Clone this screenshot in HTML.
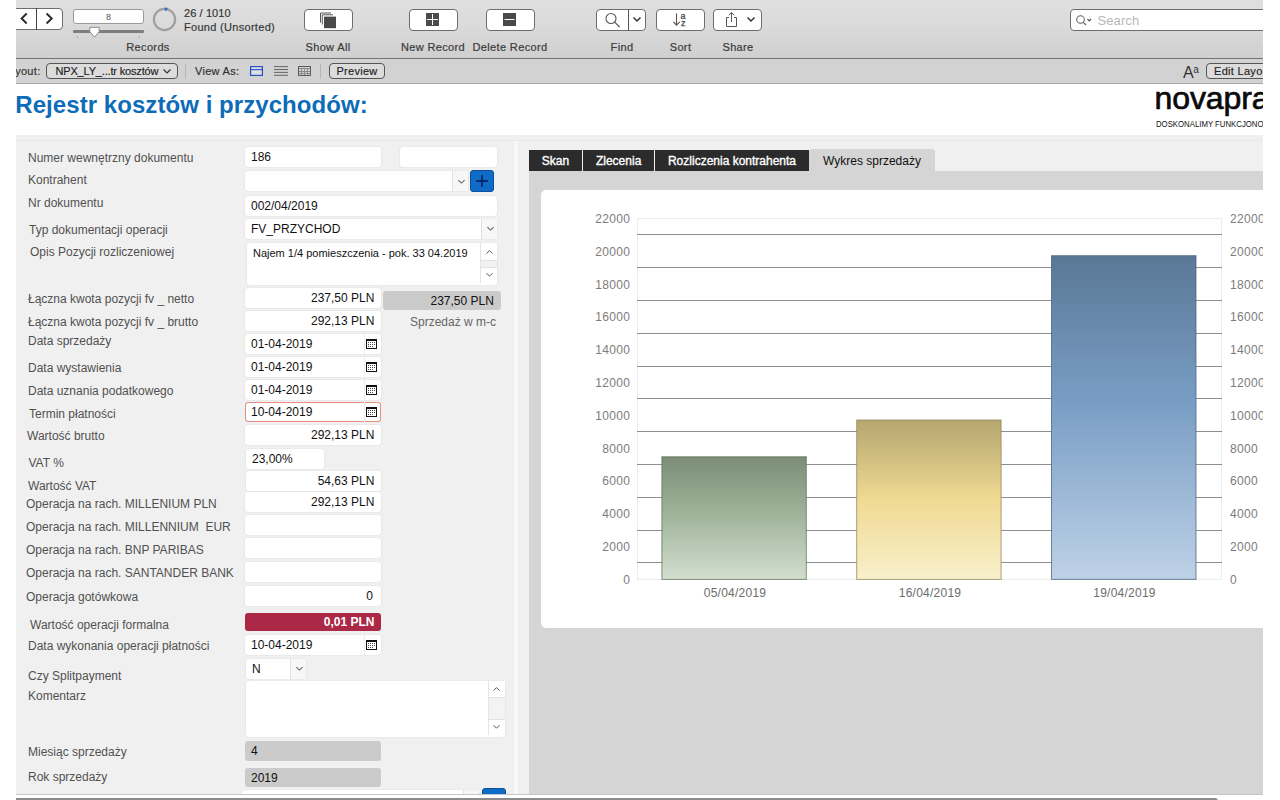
<!DOCTYPE html>
<html lang="pl">
<head>
<meta charset="utf-8">
<title>Rejestr kosztów i przychodów</title>
<style>
*{box-sizing:border-box;margin:0;padding:0}
html,body{width:1280px;height:800px;overflow:hidden;background:#fff}
body{font-family:"Liberation Sans",sans-serif;font-size:12px;color:#000;position:relative}
#app{position:absolute;left:0;top:0;width:1280px;height:800px;overflow:hidden;background:#fff}
.mask{position:absolute;top:0;height:800px;background:#fff;z-index:50}
.abs{position:absolute}
/* toolbar */
#tb{position:absolute;left:0;top:0;width:1280px;height:58px;background:linear-gradient(#dfdfdf,#dadada 45%,#cfcfcf)}
#tbline{position:absolute;left:0;top:58px;width:1280px;height:1px;background:#747474}
#sb{position:absolute;left:0;top:59px;width:1280px;height:24px;background:#d2d2d2}
#sbline{position:absolute;left:0;top:83px;width:1280px;height:1px;background:#a9a9a9}
.btn{position:absolute;top:9px;height:22px;background:#fff;border:1px solid #6e6e6e;border-radius:4px}
.tl{position:absolute;top:41px;font-size:11px;color:#3a3a3a;-webkit-text-stroke:.2px #3a3a3a;white-space:nowrap;letter-spacing:.35px;transform:translateX(-50%)}
.st{position:absolute;font-size:11px;color:#2e2e2e;-webkit-text-stroke:.15px #2e2e2e;white-space:nowrap;letter-spacing:.3px}
.pill{position:absolute;top:63.3px;height:15.6px;-webkit-text-stroke:.15px #222;border:1px solid #555;border-radius:4px;background:#dcdcdc;font-size:11px;color:#222;white-space:nowrap;letter-spacing:.3px;line-height:14px}
/* form */
#title{position:absolute;left:15.3px;top:91px;font-size:24px;font-weight:bold;color:#0d6cb8;white-space:nowrap;letter-spacing:.06px}
#panel{position:absolute;left:0;top:134.5px;width:1280px;height:659.5px;background:#f0f0f0}
.lb{position:absolute;font-size:12px;color:#505050;white-space:nowrap;line-height:14px}
.f{position:absolute;background:#fff;border:0 solid #e4e4e4;box-shadow:0 0 0 .6px #e3e3e3;border-radius:3px;font-size:12px;line-height:21px;white-space:nowrap;height:20px;padding:0 6px;color:#111}
.f.r{text-align:right;padding-right:6.6px}
.g{background:#cbcbcb;box-shadow:none}
.dd{position:absolute;right:0;top:0;bottom:0;width:16px;border-left:1px solid #e0e0e0;background:#f7f7f7}
.dd svg{position:absolute;left:3.5px;top:7.6px}
.cal{position:absolute;right:0;top:0;bottom:0;width:17px;border-left:1px solid #ececec}
.cal svg{position:absolute;left:1px;top:5px}
.tab{position:absolute;top:150px;height:21px;background:#2b2b2b;color:#fff;font-size:12px;line-height:23px;text-align:center;white-space:nowrap;-webkit-text-stroke:.35px #fff}
.tab.act{top:149px;height:23px;background:#d5d5d5;color:#111;-webkit-text-stroke:0;border-radius:3px 3px 0 0;line-height:24px}
</style>
</head>
<body>
<div id="app">
<div id="tb"></div><div id="tbline"></div><div id="sb"></div><div id="sbline"></div>


<!-- TOOLBAR -->
<div class="btn" style="left:8px;width:55px;top:8px"></div>
<div class="abs" style="left:36px;top:8px;width:1px;height:22px;background:#444"></div>
<svg class="abs" style="left:18px;top:11.3px" width="40" height="15" viewBox="0 0 40 15"><path d="M8.7 2.5 L3.6 7.5 L8.7 12.5" fill="none" stroke="#2a2a2a" stroke-width="1.9"/><path d="M28.6 2.5 L33.7 7.5 L28.6 12.5" fill="none" stroke="#2a2a2a" stroke-width="1.9"/></svg>
<div class="abs" style="left:73px;top:8.6px;width:71px;height:15px;background:#fff;border:1px solid #9a9a9a;border-radius:3px;font-size:9px;line-height:14px;text-align:center;color:#555">8</div>
<div class="abs" style="left:73px;top:30px;width:71px;height:3px;background:#7d7d7d;border-radius:1px"></div>
<svg class="abs" style="left:88px;top:26px" width="13" height="13" viewBox="0 0 13 13"><path d="M1.8 1.3 H11.2 V5.6 L6.5 11.2 L1.8 5.6 Z" fill="#fff" stroke="#8a8a8a" stroke-width="1"/></svg>
<div class="abs" style="left:77px;top:36px;width:1px;height:2px;background:#aaa"></div>
<div class="abs" style="left:139px;top:36px;width:1px;height:2px;background:#aaa"></div>
<svg class="abs" style="left:150.7px;top:6.3px" width="27" height="27" viewBox="0 0 27 27"><circle cx="13.5" cy="13.5" r="10.6" fill="none" stroke="#a0a0a0" stroke-width="2.3"/><path d="M13.7 2.9 A10.6 10.6 0 0 1 16.3 3.3" fill="none" stroke="#2f6fc4" stroke-width="3"/></svg>
<div class="st" style="left:184px;top:7px;color:#333;letter-spacing:.1px">26 / 1010</div>
<div class="st" style="left:184px;top:21px;color:#333">Found (Unsorted)</div>
<div class="tl" style="left:148px">Records</div>

<div class="btn" style="left:304px;width:49px"></div>
<svg class="abs" style="left:318.5px;top:11.7px" width="20" height="18" viewBox="0 0 20 18"><path d="M1.5 10.5 V1 H12" fill="none" stroke="#555" stroke-width="1"/><path d="M3.3 12.5 V2.8 H14" fill="none" stroke="#555" stroke-width="1"/><rect x="5" y="4.6" width="12" height="11.6" fill="#4a4a4a"/></svg>
<div class="tl" style="left:328px">Show All</div>

<div class="btn" style="left:409px;width:49px"></div>
<svg class="abs" style="left:426px;top:13px" width="13" height="13" viewBox="0 0 13 13"><rect x="0" y="0" width="13" height="13" fill="#4a4a4a"/><path d="M6.5 1 V12 M1 6.5 H12" stroke="#fff" stroke-width="1"/></svg>
<div class="tl" style="left:433px">New Record</div>

<div class="btn" style="left:486px;width:49px"></div>
<svg class="abs" style="left:503px;top:13px" width="13" height="13" viewBox="0 0 13 13"><rect x="0" y="0" width="13" height="13" fill="#4a4a4a"/><path d="M1.5 6.5 H11.5" stroke="#fff" stroke-width="1"/></svg>
<div class="tl" style="left:510px">Delete Record</div>

<div class="btn" style="left:596px;width:50px"></div>
<div class="abs" style="left:628px;top:9px;width:1px;height:22px;background:#555"></div>
<svg class="abs" style="left:603px;top:11px" width="20" height="18" viewBox="0 0 20 18"><circle cx="8" cy="7.5" r="5" fill="none" stroke="#555" stroke-width="1.1"/><path d="M11.7 11.2 L16.5 16" stroke="#555" stroke-width="1.2"/></svg>
<svg class="abs" style="left:632px;top:16px" width="10" height="7" viewBox="0 0 10 7"><path d="M1.5 1.5 L5 5 L8.5 1.5" fill="none" stroke="#333" stroke-width="1.5"/></svg>
<div class="tl" style="left:622px">Find</div>

<div class="btn" style="left:656px;width:49px"></div>
<svg class="abs" style="left:671px;top:12px" width="20" height="16" viewBox="0 0 20 16"><path d="M5.5 1.5 V13 M2.3 9.8 L5.5 13.2 L8.7 9.8" fill="none" stroke="#555" stroke-width="1.1"/><text x="9.6" y="6.8" font-family="Liberation Sans, sans-serif" font-size="9" fill="#444" stroke="#444" stroke-width=".25">a</text><text x="10" y="13.8" font-family="Liberation Sans, sans-serif" font-size="9" fill="#444" stroke="#444" stroke-width=".25">z</text></svg>
<div class="tl" style="left:680.5px">Sort</div>

<div class="btn" style="left:713px;width:49px"></div>
<svg class="abs" style="left:724px;top:11px" width="16" height="18" viewBox="0 0 16 18"><path d="M5 6.5 H2.5 V15.5 H12.5 V6.5 H10" fill="none" stroke="#555" stroke-width="1"/><path d="M7.5 11 V1.8 M4.8 4.3 L7.5 1.5 L10.2 4.3" fill="none" stroke="#555" stroke-width="1"/></svg>
<svg class="abs" style="left:746px;top:16px" width="10" height="7" viewBox="0 0 10 7"><path d="M1.5 1.5 L5 5 L8.5 1.5" fill="none" stroke="#333" stroke-width="1.5"/></svg>
<div class="tl" style="left:738px">Share</div>

<div class="btn" style="left:1070px;width:230px;border-radius:4px"></div>
<svg class="abs" style="left:1075px;top:14px" width="20" height="13" viewBox="0 0 20 13"><circle cx="5.5" cy="5.5" r="3.8" fill="none" stroke="#666" stroke-width="1.1"/><path d="M8.3 8.3 L11 11" stroke="#666" stroke-width="1.2"/><path d="M12.5 5 L14.3 6.8 L16.1 5" fill="none" stroke="#555" stroke-width="1.2"/></svg>
<div class="abs" style="left:1097.5px;top:12.5px;font-size:13px;color:#b8b8b8;letter-spacing:.1px;line-height:16px">Search</div>

<!-- STATUS BAR -->
<div class="st" style="left:0;width:40.5px;text-align:right;top:64px;line-height:14px">Layout:</div>
<div class="pill" style="left:46px;width:132px;padding-left:8.5px;letter-spacing:-.17px">NPX_LY_...tr kosztów</div>
<svg class="abs" style="left:162px;top:68px" width="10" height="7" viewBox="0 0 10 7"><path d="M1.5 1.5 L5 5 L8.5 1.5" fill="none" stroke="#333" stroke-width="1.2"/></svg>
<div class="abs" style="left:185px;top:64px;width:1px;height:15px;background:#b5b5b5"></div>
<div class="st" style="left:195px;top:64px;line-height:14px">View As:</div>
<svg class="abs" style="left:250px;top:66px" width="13" height="10" viewBox="0 0 13 10"><rect x=".6" y=".6" width="11.8" height="8.8" fill="#dde0e8" stroke="#2a50c2" stroke-width="1.2"/><path d="M.6 3.6 H12.4" stroke="#2a50c2" stroke-width="1.1"/></svg>
<svg class="abs" style="left:273.5px;top:66px" width="14" height="10" viewBox="0 0 14 10"><path d="M0 .6 H14 M0 3.5 H14 M0 6.4 H14 M0 9.3 H14" stroke="#4a4a4a" stroke-width=".8"/></svg>
<svg class="abs" style="left:298px;top:66px" width="13" height="10" viewBox="0 0 13 10" shape-rendering="crispEdges"><rect x=".5" y=".5" width="12" height="9" fill="none" stroke="#5a5a5a" stroke-width="1"/><path d="M1 2.5 H12 M1 5.5 H12 M1 7.5 H12" stroke="#8a8a8a" stroke-width="1"/><path d="M3.5 3 V9 M6.5 3 V9 M9.5 3 V9" stroke="#8a8a8a" stroke-width="1"/></svg>
<div class="abs" style="left:320px;top:64px;width:1px;height:15px;background:#b5b5b5"></div>
<div class="pill" style="left:329px;width:56px;text-align:center">Preview</div>
<div class="abs" style="left:1183px;top:61px;font-size:16px;color:#333;line-height:18px;letter-spacing:-.5px">A<span style="font-size:10px;vertical-align:5px;letter-spacing:0">a</span></div>
<div class="pill" style="left:1206px;width:80px;padding-left:7px">Edit Layout</div>

<!-- FORM PANEL -->
<div id="title">Rejestr kosztów i przychodów:</div>
<div id="panel"></div>
<!-- LABELS -->
<div class="lb" style="left:28px;top:151px">Numer wewnętrzny dokumentu</div>
<div class="lb" style="left:28px;top:173px">Kontrahent</div>
<div class="lb" style="left:28px;top:196px">Nr dokumentu</div>
<div class="lb" style="left:29px;top:223px">Typ dokumentacji operacji</div>
<div class="lb" style="left:30px;top:245.2px">Opis Pozycji rozliczeniowej</div>
<div class="lb" style="left:28px;top:292.2px">Łączna kwota pozycji fv _ netto</div>
<div class="lb" style="left:28px;top:315.2px">Łączna kwota pozycji fv _ brutto</div>
<div class="lb" style="left:28px;top:334.2px">Data sprzedaży</div>
<div class="lb" style="left:28px;top:361px">Data wystawienia</div>
<div class="lb" style="left:28px;top:384.2px">Data uznania podatkowego</div>
<div class="lb" style="left:29px;top:407.2px">Termin płatności</div>
<div class="lb" style="left:27px;top:429px">Wartość brutto</div>
<div class="lb" style="left:28.5px;top:456px">VAT %</div>
<div class="lb" style="left:28px;top:479px">Wartość VAT</div>
<div class="lb" style="left:26px;top:497.2px">Operacja na rach. MILLENIUM PLN</div>
<div class="lb" style="left:26px;top:519.8px">Operacja na rach. MILLENNIUM&nbsp; EUR</div>
<div class="lb" style="left:26px;top:543px">Operacja na rach. BNP PARIBAS</div>
<div class="lb" style="left:26px;top:566px">Operacja na rach. SANTANDER BANK</div>
<div class="lb" style="left:26px;top:590.2px">Operacja gotówkowa</div>
<div class="lb" style="left:30px;top:617.8px">Wartość operacji formalna</div>
<div class="lb" style="left:28px;top:639px">Data wykonania operacji płatności</div>
<div class="lb" style="left:28px;top:669px">Czy Splitpayment</div>
<div class="lb" style="left:28px;top:688.5px">Komentarz</div>
<div class="lb" style="left:28px;top:744.8px">Miesiąc sprzedaży</div>
<div class="lb" style="left:28px;top:769.8px">Rok sprzedaży</div>
<!-- FIELDS -->
<div class="f " style="left:245px;top:146.5px;width:136px;height:20px;">186</div>
<div class="f " style="left:400px;top:146.5px;width:97px;height:20px;"></div>
<div class="f " style="left:245px;top:171px;width:223px;height:20px;"><span class="dd"><svg width="9" height="6" viewBox="0 0 9 6"><path d="M1.4 1.2 L4.5 4.1 L7.6 1.2" fill="none" stroke="#666" stroke-width="1.1"/></svg></span></div>
<div class="abs" style="left:470px;top:170px;width:24px;height:22px;background:#0f6cc6;border:1px solid #0b4f9c;border-radius:3px"><svg class="abs" style="left:5px;top:4px" width="12" height="12" viewBox="0 0 12 12"><path d="M6 .3 V11.7 M.3 6 H11.7" stroke="#06286a" stroke-width="1.8"/></svg></div>
<div class="f " style="left:245px;top:195.5px;width:252px;height:20px;">002/04/2019</div>
<div class="f " style="left:245px;top:218.5px;width:252px;height:20px;">FV_PRZYCHOD<span class="dd"><svg width="9" height="6" viewBox="0 0 9 6"><path d="M1.4 1.2 L4.5 4.1 L7.6 1.2" fill="none" stroke="#666" stroke-width="1.1"/></svg></span></div>
<div class="f " style="left:247px;top:242.5px;width:250px;height:42px;font-size:11px;line-height:20px;padding-left:6px">Najem 1/4 pomieszczenia - pok. 33 04.2019<div class="abs" style="right:0;top:0;width:17px;height:40px;border-left:1px solid #e4e4e4;background:#fff"><svg class="abs" style="left:3.5px;top:6px" width="9" height="6" viewBox="0 0 9 6"><path d="M1.5 4.6 L4.5 1.6 L7.5 4.6" fill="none" stroke="#555" stroke-width="1"/></svg><div class="abs" style="left:0;top:17px;width:16px;height:8px;background:#f1f1f1;border-top:1px solid #e2e2e2;border-bottom:1px solid #e2e2e2"></div><svg class="abs" style="left:3.5px;top:29.5px" width="9" height="6" viewBox="0 0 9 6"><path d="M1.5 1.2 L4.5 4.2 L7.5 1.2" fill="none" stroke="#555" stroke-width="1"/></svg></div></div>
<div class="f r" style="left:245px;top:287.5px;width:136px;height:20px;">237,50 PLN</div>
<div class="f r g" style="left:382.5px;top:290.5px;width:118px;height:19px;">237,50 PLN</div>
<div class="f r" style="left:245px;top:311px;width:136px;height:20px;">292,13 PLN</div>
<div class="lb" style="left:410px;top:314.5px;color:#666">Sprzedaż w m-c</div>
<div class="f " style="left:245px;top:334px;width:136px;height:20px;">01-04-2019<span class="cal"><svg width="11" height="10" viewBox="0 0 11 10" shape-rendering="crispEdges"><rect x=".5" y=".5" width="10" height="9" fill="#fff" stroke="#111" stroke-width="1"/><rect x="0" y="0" width="11" height="2" fill="#111"/><rect x="2" y="3" width="1" height="1" fill="#444"/><rect x="4" y="3" width="1" height="1" fill="#444"/><rect x="6" y="3" width="1" height="1" fill="#444"/><rect x="8" y="3" width="1" height="1" fill="#444"/><rect x="2" y="5" width="1" height="1" fill="#444"/><rect x="4" y="5" width="1" height="1" fill="#444"/><rect x="6" y="5" width="1" height="1" fill="#444"/><rect x="8" y="5" width="1" height="1" fill="#444"/><rect x="2" y="7" width="1" height="1" fill="#444"/><rect x="4" y="7" width="1" height="1" fill="#444"/><rect x="6" y="7" width="1" height="1" fill="#444"/></svg></span></div>
<div class="f " style="left:245px;top:357px;width:136px;height:20px;">01-04-2019<span class="cal"><svg width="11" height="10" viewBox="0 0 11 10" shape-rendering="crispEdges"><rect x=".5" y=".5" width="10" height="9" fill="#fff" stroke="#111" stroke-width="1"/><rect x="0" y="0" width="11" height="2" fill="#111"/><rect x="2" y="3" width="1" height="1" fill="#444"/><rect x="4" y="3" width="1" height="1" fill="#444"/><rect x="6" y="3" width="1" height="1" fill="#444"/><rect x="8" y="3" width="1" height="1" fill="#444"/><rect x="2" y="5" width="1" height="1" fill="#444"/><rect x="4" y="5" width="1" height="1" fill="#444"/><rect x="6" y="5" width="1" height="1" fill="#444"/><rect x="8" y="5" width="1" height="1" fill="#444"/><rect x="2" y="7" width="1" height="1" fill="#444"/><rect x="4" y="7" width="1" height="1" fill="#444"/><rect x="6" y="7" width="1" height="1" fill="#444"/></svg></span></div>
<div class="f " style="left:245px;top:380px;width:136px;height:20px;">01-04-2019<span class="cal"><svg width="11" height="10" viewBox="0 0 11 10" shape-rendering="crispEdges"><rect x=".5" y=".5" width="10" height="9" fill="#fff" stroke="#111" stroke-width="1"/><rect x="0" y="0" width="11" height="2" fill="#111"/><rect x="2" y="3" width="1" height="1" fill="#444"/><rect x="4" y="3" width="1" height="1" fill="#444"/><rect x="6" y="3" width="1" height="1" fill="#444"/><rect x="8" y="3" width="1" height="1" fill="#444"/><rect x="2" y="5" width="1" height="1" fill="#444"/><rect x="4" y="5" width="1" height="1" fill="#444"/><rect x="6" y="5" width="1" height="1" fill="#444"/><rect x="8" y="5" width="1" height="1" fill="#444"/><rect x="2" y="7" width="1" height="1" fill="#444"/><rect x="4" y="7" width="1" height="1" fill="#444"/><rect x="6" y="7" width="1" height="1" fill="#444"/></svg></span></div>
<div class="f " style="left:245px;top:401.5px;width:136px;height:20.5px;box-shadow:inset 0 0 0 1px #e98d84">10-04-2019<span class="cal"><svg width="11" height="10" viewBox="0 0 11 10" shape-rendering="crispEdges"><rect x=".5" y=".5" width="10" height="9" fill="#fff" stroke="#111" stroke-width="1"/><rect x="0" y="0" width="11" height="2" fill="#111"/><rect x="2" y="3" width="1" height="1" fill="#444"/><rect x="4" y="3" width="1" height="1" fill="#444"/><rect x="6" y="3" width="1" height="1" fill="#444"/><rect x="8" y="3" width="1" height="1" fill="#444"/><rect x="2" y="5" width="1" height="1" fill="#444"/><rect x="4" y="5" width="1" height="1" fill="#444"/><rect x="6" y="5" width="1" height="1" fill="#444"/><rect x="8" y="5" width="1" height="1" fill="#444"/><rect x="2" y="7" width="1" height="1" fill="#444"/><rect x="4" y="7" width="1" height="1" fill="#444"/><rect x="6" y="7" width="1" height="1" fill="#444"/></svg></span></div>
<div class="f r" style="left:245px;top:425px;width:136px;height:20px;">292,13 PLN</div>
<div class="f " style="left:246px;top:448.5px;width:78px;height:20px;">23,00%</div>
<div class="f r" style="left:246px;top:470.5px;width:135px;height:20px;">54,63 PLN</div>
<div class="f r" style="left:245px;top:492px;width:136px;height:20px;">292,13 PLN</div>
<div class="f " style="left:245px;top:514.5px;width:136px;height:20px;"></div>
<div class="f " style="left:245px;top:538px;width:136px;height:20px;"></div>
<div class="f " style="left:245px;top:561.5px;width:136px;height:20px;"></div>
<div class="f r" style="left:245px;top:586px;width:136px;height:20px;padding-right:8px">0</div>
<div class="f r" style="left:245px;top:612.5px;width:136px;height:18.5px;background:#ab2846;box-shadow:none;color:#fff;font-weight:bold;line-height:19px">0,01 PLN</div>
<div class="f " style="left:245px;top:635px;width:136px;height:20px;">10-04-2019<span class="cal"><svg width="11" height="10" viewBox="0 0 11 10" shape-rendering="crispEdges"><rect x=".5" y=".5" width="10" height="9" fill="#fff" stroke="#111" stroke-width="1"/><rect x="0" y="0" width="11" height="2" fill="#111"/><rect x="2" y="3" width="1" height="1" fill="#444"/><rect x="4" y="3" width="1" height="1" fill="#444"/><rect x="6" y="3" width="1" height="1" fill="#444"/><rect x="8" y="3" width="1" height="1" fill="#444"/><rect x="2" y="5" width="1" height="1" fill="#444"/><rect x="4" y="5" width="1" height="1" fill="#444"/><rect x="6" y="5" width="1" height="1" fill="#444"/><rect x="8" y="5" width="1" height="1" fill="#444"/><rect x="2" y="7" width="1" height="1" fill="#444"/><rect x="4" y="7" width="1" height="1" fill="#444"/><rect x="6" y="7" width="1" height="1" fill="#444"/></svg></span></div>
<div class="f " style="left:246px;top:658.5px;width:60px;height:20px;">N<span class="dd"><svg width="9" height="6" viewBox="0 0 9 6"><path d="M1.4 1.2 L4.5 4.1 L7.6 1.2" fill="none" stroke="#666" stroke-width="1.1"/></svg></span></div>
<div class="f " style="left:246px;top:680.5px;width:259px;height:56px;"><div class="abs" style="right:0;top:0;width:17.5px;height:54px;border-left:1px solid #e4e4e4;background:#fff"><svg class="abs" style="left:3.5px;top:5.5px" width="9" height="6" viewBox="0 0 9 6"><path d="M1.5 4.6 L4.5 1.6 L7.5 4.6" fill="none" stroke="#555" stroke-width="1"/></svg><div class="abs" style="left:0;top:16px;width:16.5px;height:23px;background:#f3f3f3;border-top:1px solid #e2e2e2;border-bottom:1px solid #e2e2e2"></div><svg class="abs" style="left:3.5px;top:43.5px" width="9" height="6" viewBox="0 0 9 6"><path d="M1.5 1.2 L4.5 4.2 L7.5 1.2" fill="none" stroke="#555" stroke-width="1"/></svg></div></div>
<div class="f g" style="left:245px;top:741px;width:136px;height:19.5px;">4</div>
<div class="f g" style="left:245px;top:767.5px;width:136px;height:19.5px;">2019</div>
<div class="f " style="left:242px;top:789.5px;width:237px;height:10px;"><span class="dd"></span></div>
<div class="abs" style="left:482px;top:787.5px;width:24px;height:12px;background:#0f6cc6;border:1px solid #0b4f9c;border-radius:3px 3px 0 0"></div>


<!-- RIGHT PANEL -->
<div class="abs" style="left:16px;top:140px;width:1264px;height:1px;background:#e9e9e9"></div>
<div class="abs" style="left:514px;top:141px;width:4px;height:653px;background:#f8f8f8"></div>
<div class="abs" style="left:529px;top:171px;width:760px;height:623px;background:#d5d5d5"></div>
<div class="tab" style="left:529px;width:53px">Skan</div>
<div class="tab" style="left:583.3px;width:70.7px">Zlecenia</div>
<div class="tab" style="left:655px;width:154px">Rozliczenia kontrahenta</div>
<div class="tab act" style="left:809px;width:126px">Wykres sprzedaży</div>
<div class="abs" style="left:541px;top:190px;width:760px;height:438px;background:#fff;border-radius:5px"></div>
<svg class="abs" style="left:541px;top:190px" width="739" height="438" viewBox="541 190 739 438" font-family="Liberation Sans, sans-serif">
<defs><linearGradient id="g1" x1="0" y1="0" x2="0" y2="1"><stop offset="0" stop-color="#7b8d76"/><stop offset=".5" stop-color="#a2b69d"/><stop offset="1" stop-color="#d2decf"/></linearGradient><linearGradient id="g2" x1="0" y1="0" x2="0" y2="1"><stop offset="0" stop-color="#b5a670"/><stop offset=".5" stop-color="#f0da93"/><stop offset="1" stop-color="#f9f0cc"/></linearGradient><linearGradient id="g3" x1="0" y1="0" x2="0" y2="1"><stop offset="0" stop-color="#5a7896"/><stop offset=".45" stop-color="#789dc4"/><stop offset="1" stop-color="#bed1e7"/></linearGradient></defs>
<rect x="637.5" y="218.5" width="584" height="360.9" fill="none" stroke="#ececec" stroke-width="1"/>
<line x1="637" x2="1222" y1="562.5" y2="562.5" stroke="#8f8f8f" stroke-width="1"/>
<line x1="637" x2="1222" y1="530.5" y2="530.5" stroke="#8f8f8f" stroke-width="1"/>
<line x1="637" x2="1222" y1="497.5" y2="497.5" stroke="#8f8f8f" stroke-width="1"/>
<line x1="637" x2="1222" y1="464.5" y2="464.5" stroke="#8f8f8f" stroke-width="1"/>
<line x1="637" x2="1222" y1="431.5" y2="431.5" stroke="#8f8f8f" stroke-width="1"/>
<line x1="637" x2="1222" y1="398.5" y2="398.5" stroke="#8f8f8f" stroke-width="1"/>
<line x1="637" x2="1222" y1="366.5" y2="366.5" stroke="#8f8f8f" stroke-width="1"/>
<line x1="637" x2="1222" y1="333.5" y2="333.5" stroke="#8f8f8f" stroke-width="1"/>
<line x1="637" x2="1222" y1="300.5" y2="300.5" stroke="#8f8f8f" stroke-width="1"/>
<line x1="637" x2="1222" y1="267.5" y2="267.5" stroke="#8f8f8f" stroke-width="1"/>
<line x1="637" x2="1222" y1="234.5" y2="234.5" stroke="#8f8f8f" stroke-width="1"/>
<text x="630.3" y="583.8" text-anchor="end" font-size="12" fill="#7c7c7c" letter-spacing=".33">0</text>
<text x="1230" y="583.8" font-size="12" fill="#7c7c7c" letter-spacing=".33">0</text>
<text x="630.3" y="551.0" text-anchor="end" font-size="12" fill="#7c7c7c" letter-spacing=".33">2000</text>
<text x="1230" y="551.0" font-size="12" fill="#7c7c7c" letter-spacing=".33">2000</text>
<text x="630.3" y="518.2" text-anchor="end" font-size="12" fill="#7c7c7c" letter-spacing=".33">4000</text>
<text x="1230" y="518.2" font-size="12" fill="#7c7c7c" letter-spacing=".33">4000</text>
<text x="630.3" y="485.4" text-anchor="end" font-size="12" fill="#7c7c7c" letter-spacing=".33">6000</text>
<text x="1230" y="485.4" font-size="12" fill="#7c7c7c" letter-spacing=".33">6000</text>
<text x="630.3" y="452.6" text-anchor="end" font-size="12" fill="#7c7c7c" letter-spacing=".33">8000</text>
<text x="1230" y="452.6" font-size="12" fill="#7c7c7c" letter-spacing=".33">8000</text>
<text x="630.3" y="419.8" text-anchor="end" font-size="12" fill="#7c7c7c" letter-spacing=".33">10000</text>
<text x="1230" y="419.8" font-size="12" fill="#7c7c7c" letter-spacing=".33">10000</text>
<text x="630.3" y="386.9" text-anchor="end" font-size="12" fill="#7c7c7c" letter-spacing=".33">12000</text>
<text x="1230" y="386.9" font-size="12" fill="#7c7c7c" letter-spacing=".33">12000</text>
<text x="630.3" y="354.1" text-anchor="end" font-size="12" fill="#7c7c7c" letter-spacing=".33">14000</text>
<text x="1230" y="354.1" font-size="12" fill="#7c7c7c" letter-spacing=".33">14000</text>
<text x="630.3" y="321.3" text-anchor="end" font-size="12" fill="#7c7c7c" letter-spacing=".33">16000</text>
<text x="1230" y="321.3" font-size="12" fill="#7c7c7c" letter-spacing=".33">16000</text>
<text x="630.3" y="288.5" text-anchor="end" font-size="12" fill="#7c7c7c" letter-spacing=".33">18000</text>
<text x="1230" y="288.5" font-size="12" fill="#7c7c7c" letter-spacing=".33">18000</text>
<text x="630.3" y="255.7" text-anchor="end" font-size="12" fill="#7c7c7c" letter-spacing=".33">20000</text>
<text x="1230" y="255.7" font-size="12" fill="#7c7c7c" letter-spacing=".33">20000</text>
<text x="630.3" y="222.9" text-anchor="end" font-size="12" fill="#7c7c7c" letter-spacing=".33">22000</text>
<text x="1230" y="222.9" font-size="12" fill="#7c7c7c" letter-spacing=".33">22000</text>
<rect x="661.9" y="456.8" width="144.4" height="122.6" fill="url(#g1)" stroke="#5e6d5a" stroke-width="1" stroke-opacity=".75"/>
<rect x="856.7" y="420.0" width="144.4" height="159.4" fill="url(#g2)" stroke="#8f8355" stroke-width="1" stroke-opacity=".75"/>
<rect x="1051.5" y="255.7" width="144.5" height="323.7" fill="url(#g3)" stroke="#44607c" stroke-width="1" stroke-opacity=".75"/>
<text x="735.0" y="597" text-anchor="middle" font-size="12" fill="#6c6c6c" letter-spacing=".25">05/04/2019</text>
<text x="930.0" y="597" text-anchor="middle" font-size="12" fill="#6c6c6c" letter-spacing=".25">16/04/2019</text>
<text x="1124.5" y="597" text-anchor="middle" font-size="12" fill="#6c6c6c" letter-spacing=".25">19/04/2019</text>
</svg>

<!-- BOTTOM -->
<div class="abs" style="left:0;top:794px;width:1280px;height:6px;background:#fff;z-index:20"></div>
<div class="abs" style="left:0;top:793.5px;width:1280px;height:1px;background:#c6c6c6;z-index:21"></div>
<div class="abs" style="left:0;top:797.7px;width:1217.5px;height:4px;background:#8b8b8b;border-radius:0 3px 0 0;z-index:22"></div>
<!-- LOGO -->
<div id="logo" class="abs" style="left:1154.5px;top:79.4px;font-size:32px;line-height:38px;letter-spacing:-.1px;color:#0a0a0a;white-space:nowrap;-webkit-text-stroke:.7px #0a0a0a">novapraxis</div>
<div id="tag" class="abs" style="left:1155.5px;top:118.3px;font-size:9.4px;line-height:11px;color:#111;white-space:nowrap;transform:scaleX(.83);transform-origin:0 0">DOSKONALIMY FUNKCJONOWANIE</div>
<div class="mask" style="left:0;width:16px"></div><div class="mask" style="left:1263px;width:17px"></div>
</div>
</body>
</html>
